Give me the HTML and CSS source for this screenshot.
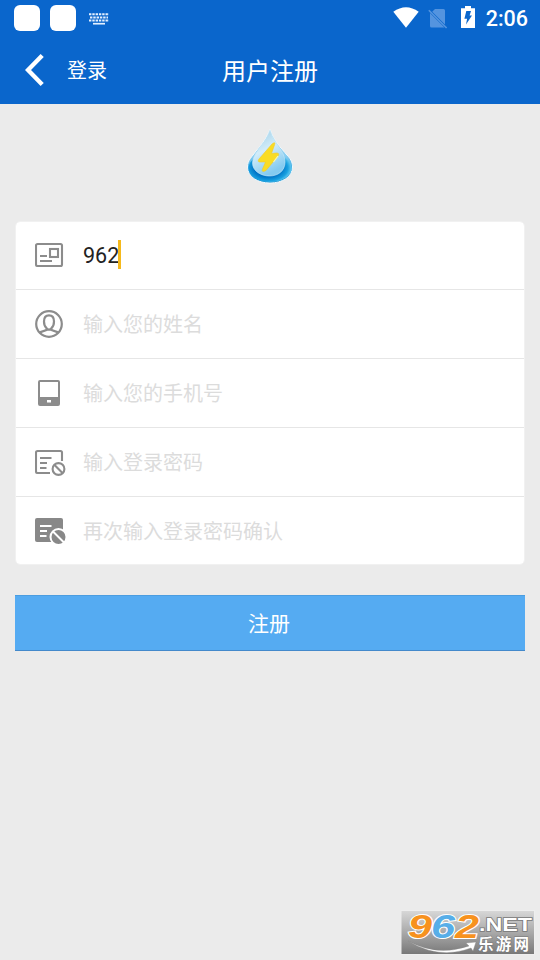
FILE: index.html
```html
<!DOCTYPE html>
<html lang="zh-CN">
<head>
<meta charset="utf-8">
<title>用户注册</title>
<link rel="stylesheet" href="styles.css">
</head>
<body>
<header class="top">
  <div class="status">
    <span class="app"></span><span class="app"></span>
    <svg class="keyboard" width="22" height="12" viewBox="0 0 22 12" fill="none" stroke="#e4f0ff" stroke-width="2">
      <path d="M1 1.2H21M1 7.6H21" stroke-dasharray="2.4 .9"/><path d="M2 4.4H20" stroke-dasharray="2.4 .9"/><path d="M5 10.7H17" stroke-width="1.7"/>
    </svg>
    <span class="spacer"></span>
    <svg class="wifi" width="26" height="21" viewBox="0 0 26 21"><path d="M.3 4.8Q13-4.2 25.7 4.8L13 20.7Z" fill="#fff"/></svg>
    <svg class="sim" width="20" height="21" viewBox="0 0 20 21"><path d="M7 1H15.5Q17 1 17 2.5V16.5L4.2 3.8ZM2 5 16.5 19.5H3.5Q2 19.5 2 18Z" fill="#5494df"/><path d="M.8 2.2 18.6 20" stroke="#5494df" stroke-width="1.6"/></svg>
    <svg class="battery" width="14" height="22" viewBox="0 0 14 22"><path d="M0 2.2H4V0H10V2.2H14V22H0Z" fill="#fff"/><path d="M5.3 5H10L8.6 9.5H11L5 18.5 6.1 12.8H3.4Z" fill="#0a66cc"/></svg>
    <span class="clock">2:06</span>
  </div>
  <nav class="nav">
    <a class="back"><svg width="20" height="34" viewBox="0 0 20 34" fill="none" stroke="#fff" stroke-width="4.4"><path d="M17.2 2.5 3 17 17.2 31.5"/></svg><span>登录</span></a>
    <h1>用户注册</h1>
  </nav>
</header>
<main>
  <svg class="logo" width="48" height="57" viewBox="0 0 48 57">
    <defs>
      <linearGradient id="water" x1="0" y1="0" x2="0" y2="1"><stop offset="0" stop-color="#7dbddd"/><stop offset=".48" stop-color="#8ed0f2"/><stop offset=".72" stop-color="#39aae5"/><stop offset="1" stop-color="#0788cb"/></linearGradient>
      <radialGradient id="rim" cx=".45" cy=".5" r=".58"><stop offset=".55" stop-color="#0075c7"/><stop offset=".8" stop-color="#18a0e0"/><stop offset="1" stop-color="#7dd9f6"/></radialGradient>
      <linearGradient id="glass" x1="0" y1="0" x2=".4" y2="1"><stop offset="0" stop-color="#98cae4"/><stop offset=".5" stop-color="#d2ecf9"/><stop offset="1" stop-color="#83caf0"/></linearGradient>
    </defs>
    <path d="M24 .5C28 12 35 19 41 26 46 31 46.5 35 46.5 38 46.5 48 36 54 24 54S1.5 48 1.5 38C1.5 31 6 28 10 22 17 14 21 8 24 .5Z" fill="url(#water)" stroke="#f2f9fc" stroke-width="1"/>
    <ellipse cx="24" cy="39" rx="21.5" ry="14" fill="url(#rim)"/>
    <path d="M24 1C27 13 39 22 39 33 39 42 32 47 23.5 47S6.500 42 6.500 34C6.500 24 20 14 24 1Z" fill="url(#glass)" stroke="#c9eaf8" stroke-width=".6"/>
    <path d="M26 15Q30 12 28.500 16L25.500 24.500 30.500 24Q34 24 32 27L20 41.500Q15 44 16.500 40L19.500 33 14 33Q11 33 13 30Z" fill="#f9dc24" stroke="#f1c929" stroke-width=".6"/>
    <path d="M32 27 27.5 33" stroke="#fff9a8" stroke-width="1.2"/>
  </svg>
  <form class="card">
    <label class="row">
      <svg width="32" height="28" viewBox="0 0 32 28" fill="none" stroke="#8c8c8c" stroke-width="2.1"><rect x="1" y="2" width="26" height="22" rx="1.5"/><rect x="15" y="7" width="8" height="8"/><path d="M5 14H12M5 19H17"/></svg>
      <span class="value">962</span><i class="caret"></i>
    </label>
    <label class="row">
      <svg width="32" height="28" viewBox="0 0 32 28" fill="none" stroke="#8c8c8c" stroke-width="2.2"><circle cx="14" cy="14" r="12.8"/><path d="M14 5.3C10.7 5.3 9 7.5 9 11.5 9 14.8 10.3 17 11.5 18V20L4.8 22.4M14 5.3C17.3 5.3 19 7.5 19 11.5 19 14.8 17.7 17 16.5 18V20L23.2 22.4M11.5 18.5Q14 20.7 16.5 18.5"/></svg>
      <span>输入您的姓名</span>
    </label>
    <label class="row">
      <svg width="32" height="28" viewBox="0 0 32 28"><path fill="#8c8c8c" fill-rule="evenodd" d="M5 1H23Q25 1 25 3V25Q25 27 23 27H5Q3 27 3 25V3Q3 1 5 1ZM5 3V18H23V3ZM12 21V23.5H16V21Z"/></svg>
      <span>输入您的手机号</span>
    </label>
    <label class="row">
      <svg width="32" height="28" viewBox="0 0 32 28" fill="none" stroke="#8c8c8c" stroke-width="2.1"><path d="M15 25H2.5Q1 25 1 23.5V4.5Q1 3 2.5 3H25.5Q27 3 27 4.5V13M5 10H16.5M5 15H12M5 20H11.5"/><circle cx="23.5" cy="21" r="5.9"/><path d="M19.3 16.8 27.7 25.2"/></svg>
      <span>输入登录密码</span>
    </label>
    <label class="row">
      <svg width="32" height="30" viewBox="0 -1 32 30" fill="none" stroke="#fff" stroke-width="2"><rect y="1" width="28" height="24" rx="2" fill="#888" stroke="none"/><path d="M5 9H16.5M5 14H12M5 19H11.5"/><circle cx="23.5" cy="20" r="8" fill="#888"/><path d="M18 14.5 29 25.5"/></svg>
      <span>再次输入登录密码确认</span>
    </label>
  </form>
  <button class="submit">注册</button>
</main>
<svg class="watermark" width="134" height="45" viewBox="0 0 134 45">
  <defs><linearGradient id="plate" x1="0" y1="0" x2="0" y2="1"><stop offset="0" stop-color="#d8d8d8"/><stop offset=".5" stop-color="#a9a9a9"/><stop offset="1" stop-color="#777"/></linearGradient></defs>
  <rect x="0" y=".5" width="133.5" height="44" fill="url(#plate)" stroke="#eee"/>
  <path d="M7 31Q36 47 68 36L65 33 75 32 72 41 70 38Q38 50 7 31Z" fill="#fff" stroke="#888" stroke-width=".4"/>
  <g class="digits"><text x="7" y="28" textLength="24" lengthAdjust="spacingAndGlyphs" fill="#f7921e">9</text><text x="30" y="28" textLength="24" lengthAdjust="spacingAndGlyphs" fill="#57aee8">6</text><text x="54" y="28" textLength="24" lengthAdjust="spacingAndGlyphs" fill="#f7921e">2</text></g>
  <text class="net" x="78" y="21" textLength="53" lengthAdjust="spacingAndGlyphs">.NET</text>
  <text class="site" x="77" y="40" textLength="51">乐游网</text>
</svg>
</body>
</html>
```
FILE: styles.css
```css
* { box-sizing: border-box; }
body {
  margin: 0;
  height: 960px;
  overflow: hidden;
  background: #ebebeb;
  font-family: Roboto, "Noto Sans CJK SC", sans-serif;
}
svg { display: block; flex: none; }
.top { height: 104px; background: #0a66cc; color: #fff; }
.status { display: flex; height: 36px; padding: 0 12px 0 14px; align-items: center; }
.app { width: 26px; height: 26px; margin-right: 10px; border-radius: 6px; background: #fff; }
.keyboard { margin-left: 2px; margin-top: 1px; }
.spacer { flex: 1; }
.wifi { margin-right: 9px; margin-top: -1px; }
.sim { margin-right: 13px; }
.battery { margin-right: 11px; margin-top: -2px; }
.clock { font-size: 21.5px; font-weight: 500; line-height: 36px; padding-top: 2px; }
.nav { display: grid; grid-template-columns: 1fr auto 1fr; align-items: center; height: 68px; }
.back { display: flex; align-items: center; padding-left: 25px; gap: 22px; font-size: 20px; line-height: 30px; }
.back span { padding-top: 2px; }
h1 { margin: 0; padding-top: 3px; font-size: 24px; font-weight: 400; line-height: 36px; }
main { padding: 25px 15px 0; }
.logo { margin: 0 auto 35px; }
.card { border: 1px solid #f1f1f1; border-radius: 5px; background: #fff; background-clip: padding-box; height: 344px; }
.row { display: flex; align-items: center; height: 69px; padding-left: 19px; border-bottom: 1px solid #e6e6e6; color: #dcdcdc; font-size: 20px; line-height: 30px; }
.row:first-child { height: 68px; }
.row:last-child { height: 68px; border: 0; }
.row svg { margin-right: 16px; }
.row span { padding-top: 2px; }
.row .value { padding-top: 0; color: #222; font-size: 21.5px; }
.caret { width: 3px; height: 29px; margin-top: -2px; margin-left: -1px; background: #f5b91c; }
.submit { display: block; width: 510px; height: 56px; margin: 30px 0 0; padding: 2px 2px 0 0; border: 0; border-top: 1px solid #4b9de0; border-bottom: 1px solid #4389cb; background: #55abf2; color: #fff; font: 21px/52px Roboto, "Noto Sans CJK SC", sans-serif; }
.watermark { position: absolute; left: 401px; top: 910px; overflow: visible; }
.digits { font: italic 700 34px "Liberation Sans", sans-serif; stroke: #fff; stroke-width: 2px; paint-order: stroke; }
.net { font: 700 19px "Liberation Sans", sans-serif; fill: #fff; stroke: #777; stroke-width: 1.5px; paint-order: stroke; }
.site { font: 700 15.5px "Noto Sans CJK SC", sans-serif; fill: #fff; stroke: #777; stroke-width: 1px; paint-order: stroke; }
```
